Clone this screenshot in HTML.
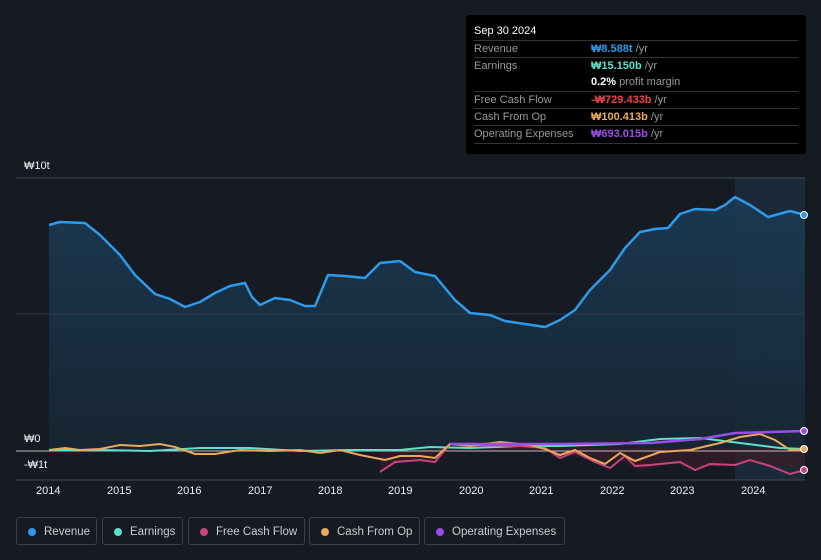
<!DOCTYPE html><html><head><style>
body{margin:0;width:821px;height:560px;background:#151a23;font-family:"Liberation Sans",sans-serif;overflow:hidden;position:relative}
.tt{position:absolute;left:466px;top:15px;width:340px;height:139px;background:#000;border-radius:3px}
.tt .h{color:#fff;font-size:11px;position:absolute;left:8px;top:10px}
.row{position:absolute;left:8px;width:324px;border-top:1px solid #333;font-size:11px;color:#999;height:17px;line-height:16px}
.row b{position:absolute;left:117px}
.row b span{font-weight:normal}
.leg{position:absolute;top:517px;height:28px;border:1px solid #3a3f48;border-radius:3px;color:#ccc;font-size:11.5px;line-height:28px;box-sizing:border-box;padding-left:27px}
.leg i{position:absolute;left:11px;top:10px;width:8px;height:8px;border-radius:50%}
.ax{position:absolute;color:#eee;font-size:11px}
</style></head><body>
<svg width="821" height="560" style="position:absolute;left:0;top:0">
<defs><linearGradient id="g" x1="0" y1="0" x2="0" y2="1"><stop offset="0" stop-color="#1b3b55"/><stop offset="1" stop-color="#172633"/></linearGradient></defs>
<rect x="735" y="178" width="70" height="302" fill="#1a2a38"/>
<path d="M49,225 L60,222 L85,223 L100,235 L120,255 L135,275 L155,294 L170,299 L185,307 L200,302 L215,293 L230,286 L245,283 L252,297 L260,305 L275,298 L290,300 L305,306 L315,306 L328,275 L345,276 L365,278 L380,263 L400,261 L415,272 L435,276 L455,300 L470,313 L490,315 L505,321 L525,324 L545,327 L560,320 L575,310 L590,290 L610,270 L625,248 L640,232 L655,229 L668,228 L680,214 L695,209 L715,210 L725,205 L735,197 L750,205 L768,217 L790,211 L805,215 L805,451 L49,451Z" fill="url(#g)" opacity="0.9"/>
<path d="M380,451 L380,472 L400,462 L430,460 L440,448 L805,448 L805,470 L780,466 L750,462 L730,466 L690,468 L670,463 L640,470 L620,460 L600,464 L570,455 L560,458 L545,451Z" fill="#3a1c26" opacity="0.7"/>
<line x1="16" y1="178" x2="805" y2="178" stroke="#444a55"/>
<line x1="16" y1="314" x2="805" y2="314" stroke="#333a44"/>
<line x1="16" y1="451" x2="805" y2="451" stroke="#bbb"/>
<line x1="16" y1="480" x2="805" y2="480" stroke="#444a55"/>
<path d="M49,225 L60,222 L85,223 L100,235 L120,255 L135,275 L155,294 L170,299 L185,307 L200,302 L215,293 L230,286 L245,283 L252,297 L260,305 L275,298 L290,300 L305,306 L315,306 L328,275 L345,276 L365,278 L380,263 L400,261 L415,272 L435,276 L455,300 L470,313 L490,315 L505,321 L525,324 L545,327 L560,320 L575,310 L590,290 L610,270 L625,248 L640,232 L655,229 L668,228 L680,214 L695,209 L715,210 L725,205 L735,197 L750,205 L768,217 L790,211 L805,215" fill="none" stroke="#2d9be8" stroke-width="2.5" stroke-linejoin="round"/>
<path d="M49,450 L100,450 L150,451 L200,448 L250,448 L300,451 L350,450 L400,450 L430,447 L470,448 L520,446 L560,446 L620,444 L660,439 L700,438 L740,443 L780,448 L805,449" fill="none" stroke="#5ee0cc" stroke-width="2"/>
<path d="M380,472 L395,462 L420,460 L435,462 L450,444 L470,445 L520,446 L545,448 L560,458 L575,452 L595,462 L610,468 L625,456 L635,466 L650,465 L680,462 L695,470 L710,464 L735,465 L750,460 L770,466 L790,474 L805,470" fill="none" stroke="#c9447c" stroke-width="2"/>
<path d="M49,450 L65,448 L80,450 L100,449 L120,445 L140,446 L160,444 L175,447 L195,454 L215,454 L240,450 L270,451 L300,450 L320,453 L340,450 L360,455 L385,460 L400,456 L420,456 L435,458 L450,444 L470,446 L500,442 L530,445 L545,449 L560,455 L575,450 L590,458 L605,464 L620,453 L635,461 L660,452 L690,450 L720,443 L740,437 L760,434 L775,440 L790,450 L805,449" fill="none" stroke="#e8a95c" stroke-width="2"/>
<path d="M450,444 L560,444 L650,443 L700,439 L735,433 L770,432 L805,431" fill="none" stroke="#9b4de8" stroke-width="2.5"/>
<circle cx="804" cy="215" r="3.5" fill="#2d9be8" stroke="#fff"/>
<circle cx="804" cy="431" r="3.5" fill="#9b4de8" stroke="#fff"/>
<circle cx="804" cy="449" r="3.5" fill="#e8a95c" stroke="#fff"/>
<circle cx="804" cy="470" r="3.5" fill="#c9447c" stroke="#fff"/>
</svg>
<div class="ax" style="left:24px;top:160px">₩10t</div>
<div class="ax" style="left:24px;top:433px">₩0</div>
<div class="ax" style="left:24px;top:459px">-₩1t</div>
<div class="ax" style="left:36px;top:485px">2014</div><div class="ax" style="left:107px;top:485px">2015</div><div class="ax" style="left:177px;top:485px">2016</div><div class="ax" style="left:248px;top:485px">2017</div><div class="ax" style="left:318px;top:485px">2018</div><div class="ax" style="left:388px;top:485px">2019</div><div class="ax" style="left:459px;top:485px">2020</div><div class="ax" style="left:529px;top:485px">2021</div><div class="ax" style="left:600px;top:485px">2022</div><div class="ax" style="left:670px;top:485px">2023</div><div class="ax" style="left:741px;top:485px">2024</div>
<div class="tt"><div class="h">Sep 30 2024</div>
<div class="row" style="top:25px">Revenue<b style="color:#2d9be8">₩8.588t <span style="color:#999">/yr</span></b></div>
<div class="row" style="top:42px">Earnings<b style="color:#5ee0cc">₩15.150b <span style="color:#999">/yr</span></b></div>
<div class="row" style="top:59px;border:0"><b style="color:#fff">0.2% <span style="color:#999">profit margin</span></b></div>
<div class="row" style="top:76px">Free Cash Flow<b style="color:#e84545">-₩729.433b <span style="color:#999">/yr</span></b></div>
<div class="row" style="top:93px">Cash From Op<b style="color:#e8a95c">₩100.413b <span style="color:#999">/yr</span></b></div>
<div class="row" style="top:110px;border-bottom:1px solid #333">Operating Expenses<b style="color:#9b4de8">₩693.015b <span style="color:#999">/yr</span></b></div>
</div>
<div class="leg" style="left:16px;width:81px"><i style="background:#2d9be8"></i>Revenue</div>
<div class="leg" style="left:102px;width:81px"><i style="background:#5ee0cc"></i>Earnings</div>
<div class="leg" style="left:188px;width:117px"><i style="background:#c9447c"></i>Free Cash Flow</div>
<div class="leg" style="left:309px;width:111px"><i style="background:#e8a95c"></i>Cash From Op</div>
<div class="leg" style="left:424px;width:141px"><i style="background:#9b4de8"></i>Operating Expenses</div>
</body></html>
